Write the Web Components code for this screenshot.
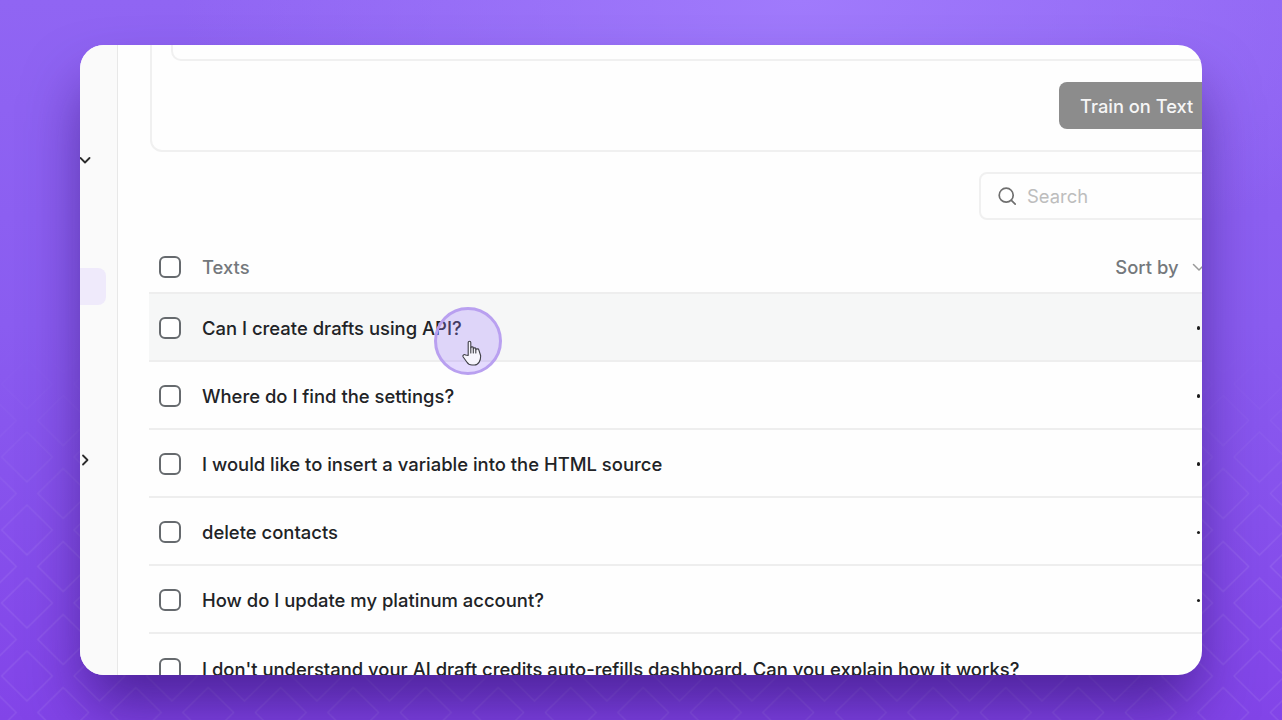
<!DOCTYPE html>
<html lang="en">
<head>
<meta charset="utf-8">
<title>Train on Text</title>
<style>
  html, body { margin: 0; height: 100%; }
  body { font-family: Inter, "Liberation Sans", sans-serif; overflow: hidden; }
</style>
</head>
<body>
<promo-stage>
  <app-window>
    <side-rail slot="rail"></side-rail>
    <train-card></train-card>
    <search-box></search-box>
    <texts-table>
      <text-row>Can I create drafts using API?</text-row>
      <text-row>Where do I find the settings?</text-row>
      <text-row>I would like to insert a variable into the HTML source</text-row>
      <text-row>delete contacts</text-row>
      <text-row>How do I update my platinum account?</text-row>
      <text-row>I don't understand your AI draft credits auto-refills dashboard. Can you explain how it works?</text-row>
    </texts-table>
    <click-pulse slot="overlay"></click-pulse>
  </app-window>
</promo-stage>

<script>
// Purple backdrop with the diamond lattice, fades out towards the top
class PromoStage extends HTMLElement {
  constructor() {
    super();
    this.attachShadow({ mode: "open" });
    this.shadowRoot.innerHTML = `
      <style>
        :host {
          display: block;
          position: relative;
          width: 1282px;
          height: 720px;
          overflow: hidden;
          background:
            radial-gradient(ellipse 620px 300px at 800px 0, #a07afc 0%, rgba(160,122,252,0) 100%),
            linear-gradient(180deg, #9065f3 0%, #8a5cf0 45%, #8244e8 100%);
        }
        svg {
          position: absolute;
          inset: 0;
          -webkit-mask-image: linear-gradient(180deg, transparent 330px, #000 560px);
          mask-image: linear-gradient(180deg, transparent 330px, #000 560px);
        }
        .wrap {
          position: relative;
          padding: 45px 80px;
        }
      </style>
      <svg width="1282" height="720" aria-hidden="true">
        <defs>
          <pattern id="lattice" width="72.5" height="73" patternUnits="userSpaceOnUse" patternTransform="translate(-9.25 -17.5)">
            <g fill="none" stroke="#fff" stroke-opacity=".09" stroke-width="1.3">
              <path d="M36.250 11.500 61.750 36.500 36.250 61.500 10.750 36.500Z"/>
              <path d="M72.500 48 98 73 72.500 98 47 73Z"/>
              <path d="M0 48 25.500 73 0 98-25.500 73Z"/>
              <path d="M72.500-25 98 0 72.500 25 47 0Z"/>
              <path d="M0-25 25.500 0 0 25-25.500 0Z"/>
            </g>
          </pattern>
        </defs>
        <rect width="1282" height="720" fill="url(#lattice)"/>
      </svg>
      <div class="wrap"><slot></slot></div>
    `;
  }
}

class AppWindow extends HTMLElement {
  constructor() {
    super();
    this.attachShadow({ mode: "open" });
    this.shadowRoot.innerHTML = `
      <style>
        :host {
          display: flex;
          position: relative;
          width: 1122px;
          height: 630px;
          border-radius: 24px;
          overflow: hidden;
          background: #fefefe;
          box-shadow: 0 36px 60px -6px rgba(40, 10, 100, .6);
        }
        main {
          flex: none;
          width: 1100px;
          padding-left: 31px;
        }
      </style>
      <slot name="rail"></slot>
      <main><slot></slot></main>
      <slot name="overlay"></slot>
    `;
  }
}

class SideRail extends HTMLElement {
  constructor() {
    super();
    this.attachShadow({ mode: "open" });
    this.shadowRoot.innerHTML = `
      <style>
        :host {
          display: block;
          flex: none;
          width: 37px;
          height: 100%;
          background: #fafafa;
          border-right: 1px solid #e8e8e8;
        }
        .rail {
          display: flex;
          flex-direction: column;
          padding-top: 107px;
        }
        svg { display: block; margin-left: -3px; }
        .active {
          width: 26px;
          height: 37px;
          margin: 100px 0 147px;
          border-radius: 0 8px 8px 0;
          background: #efeafb;
        }
      </style>
      <div class="rail">
        <svg width="16" height="16" viewBox="0 0 16 16" fill="none" stroke="#2b2b2b" stroke-width="1.8" stroke-linecap="round" stroke-linejoin="round"><path d="M3.500 6 8 10.500 12.500 6"/></svg>
        <div class="active"></div>
        <svg width="16" height="16" viewBox="0 0 16 16" fill="none" stroke="#2b2b2b" stroke-width="1.8" stroke-linecap="round" stroke-linejoin="round"><path d="M6 3.500 10.500 8 6 12.500"/></svg>
      </div>
    `;
  }
}

// Scrolled card: only its lower part is still in view, so no top border
class TrainCard extends HTMLElement {
  constructor() {
    super();
    this.attachShadow({ mode: "open" });
    this.shadowRoot.innerHTML = `
      <style>
        :host {
          display: block;
          box-sizing: border-box;
          height: 107px;
          margin-left: 1px;
          padding: 0 0 0 19px;
          border: 2px solid #f0f0f0;
          border-top: 0;
          border-radius: 0 0 0 12px;
        }
        .input {
          height: 16px;
          border: 2px solid #f0f0f0;
          border-top: 0;
          border-radius: 0 0 0 10px;
          box-sizing: border-box;
        }
        .actions {
          padding-top: 21px;
          padding-left: 888px;
        }
        button {
          display: block;
          width: 150px;
          height: 47px;
          padding: 0 0 0 21px;
          border: 0;
          border-radius: 8px;
          background: #8c8c8c;
          color: #f6f6f6;
          font: 550 18.3px Inter, "Liberation Sans", sans-serif;
          text-align: left;
          white-space: nowrap;
        }
      </style>
      <div class="input"></div>
      <div class="actions"><button>Train on Text</button></div>
    `;
  }
}

class SearchBox extends HTMLElement {
  constructor() {
    super();
    this.attachShadow({ mode: "open" });
    this.shadowRoot.innerHTML = `
      <style>
        :host {
          display: block;
          padding: 20px 0 24px 830px;
        }
        .box {
          display: flex;
          align-items: center;
          gap: 10px;
          box-sizing: border-box;
          width: 260px;
          height: 48px;
          padding-left: 16px;
          border: 2px solid #f0f0f0;
          border-radius: 8px;
          color: #bdbdbd;
          font-size: 18.4px;
        }
        svg { flex: none; }
      </style>
      <div class="box">
        <svg width="20" height="20" viewBox="0 0 20 20" fill="none" stroke="#6f6f6f" stroke-width="1.7" stroke-linecap="round"><circle cx="9.200" cy="9.200" r="7"/><path d="m14.400 14.400 3.800 3.800"/></svg>
        <span>Search</span>
      </div>
    `;
  }
}

class CheckBox extends HTMLElement {
  constructor() {
    super();
    this.attachShadow({ mode: "open" });
    this.shadowRoot.innerHTML = `
      <style>
        :host {
          display: block;
          flex: none;
          box-sizing: border-box;
          width: 22px;
          height: 22px;
          border: 2px solid #666a6e;
          border-radius: 6px;
          background: #fff;
        }
      </style>
    `;
  }
}
customElements.define("check-box", CheckBox);

class TextsTable extends HTMLElement {
  constructor() {
    super();
    this.attachShadow({ mode: "open" });
    this.shadowRoot.innerHTML = `
      <style>
        :host { display: block; }
        .head {
          display: flex;
          align-items: center;
          gap: 21px;
          box-sizing: border-box;
          height: 48px;
          padding: 0 0 2px 10px;
          color: #74787c;
          font-size: 18.4px;
          font-weight: 480;
        }
        .label { flex: 1; }
        .sort {
          display: flex;
          align-items: center;
          gap: 12.5px;
          padding-right: 42px;
        }
        svg { display: block; }
      </style>
      <div class="head">
        <check-box></check-box>
        <span class="label">Texts</span>
        <span class="sort">Sort by
          <svg width="16" height="16" viewBox="0 0 16 16" fill="none" stroke="#9a9a9a" stroke-width="1.5" stroke-linecap="round" stroke-linejoin="round"><path d="M2.500 5.500 8 11l5.500-5.500"/></svg>
        </span>
      </div>
      <slot></slot>
    `;
  }
}

class TextRow extends HTMLElement {
  constructor() {
    super();
    this.attachShadow({ mode: "open" });
    this.shadowRoot.innerHTML = `
      <style>
        :host {
          display: flex;
          align-items: center;
          gap: 21px;
          box-sizing: border-box;
          height: 68.1px;
          padding: 2px 0 0 10px;
          border-top: 2px solid #eeeeee;
          color: #212326;
          font-size: 18.45px;
          font-weight: 460;
          white-space: nowrap;
        }
        :host(:first-of-type) { background: #f6f7f7; }
        .text { flex: 1; }
        .more {
          display: flex;
          gap: 3px;
          padding-right: 36px;
        }
        .more i {
          width: 3.500px;
          height: 3.500px;
          border-radius: 50%;
          background: #1c1c1c;
        }
      </style>
      <check-box></check-box>
      <span class="text"><slot></slot></span>
      <span class="more"><i></i><i></i><i></i></span>
    `;
  }
}

class ClickPulse extends HTMLElement {
  constructor() {
    super();
    this.attachShadow({ mode: "open" });
    this.shadowRoot.innerHTML = `
      <style>
        :host {
          display: block;
          position: absolute;
          left: 354px;
          top: 262px;
          width: 68px;
          height: 68px;
          box-sizing: border-box;
          border: 3px solid #b9a0f0;
          border-radius: 50%;
          background: rgba(160, 125, 255, .28);
        }
        svg { position: absolute; left: 25px; top: 30px; }
      </style>
      <svg width="20" height="26" viewBox="0 0 20 26" fill="#f7f5fd" stroke="#3f3f46" stroke-width="1.1" stroke-linejoin="round" stroke-linecap="round">
        <path d="M6.200 15.500V2.500C6.200.8 8.800.8 8.800 2.500V7.800C8.800 6.600 11.300 6.600 11.300 7.800V8.800C11.300 7.600 13.800 7.600 13.800 8.800V9.800C13.800 8.600 16.800 8.600 16.800 9.800L18.600 15.500C18.900 20.500 16.500 25 12.500 25H10C7.500 25 6 24 4.800 22L1.200 17C.2 15.400 2.200 13.800 3.600 15Z"/>
        <path d="M8.800 7.800V13M11.300 8.800V13M13.800 9.800V13" fill="none"/>
      </svg>
    `;
  }
}

customElements.define("promo-stage", PromoStage);
customElements.define("app-window", AppWindow);
customElements.define("side-rail", SideRail);
customElements.define("train-card", TrainCard);
customElements.define("search-box", SearchBox);
customElements.define("texts-table", TextsTable);
customElements.define("text-row", TextRow);
customElements.define("click-pulse", ClickPulse);
</script>
</body>
</html>
